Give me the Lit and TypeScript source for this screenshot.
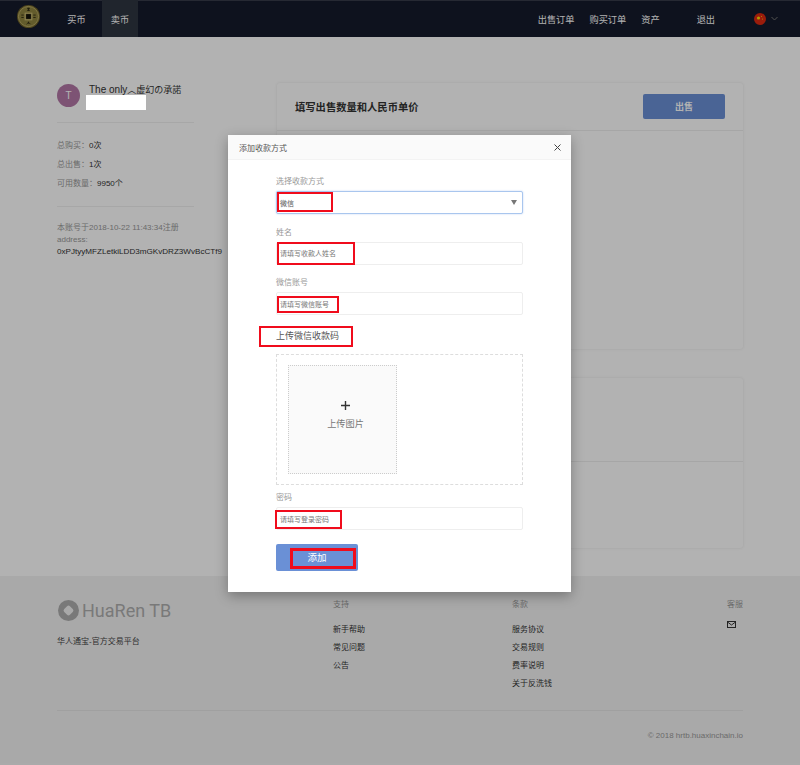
import { LitElement, html, css } from "lit";
import { customElement } from "lit/decorators.js";

const SANS = css`"Liberation Sans", "Noto Sans CJK SC", sans-serif`;

@customElement("app-root")
export class AppRoot extends LitElement {
  static styles = css`
    :host { display: block; position: relative; width: 800px; height: 765px; overflow: hidden; background: #fff; font-family: ${SANS}; font-size: 8px; color: #333; }
    .page { display: flex; flex-direction: column; height: 765px; }
    .nav { height: 37px; flex: none; background: #151a2b; display: flex; align-items: stretch; padding-left: 17px; color: #fff; font-size: 9.2px; box-sizing: border-box; box-shadow: inset 0 1px 0 rgba(255,255,255,.15); }
    .coin { width: 23px; height: 23px; margin-top: 5px; margin-right: 18px; }
    .tab { width: 37px; display: flex; align-items: center; justify-content: center; }
    .tab.active { background: #2f3541; width: 36px; margin-left: 7px; }
    .spacer { flex: 1; }
    .navr { display: flex; align-items: center; }
    .navr span.a { margin-right: 15px; }
    .navr span.out { margin-left: 37px; margin-right: 39px; }
    .flag { width: 12px; height: 12px; margin-right: 5px; }
    .chev { width: 7px; height: 5px; margin-right: 22px; }
    .main { flex: 1; background: #fff; display: flex; padding: 46px 57px 0; gap: 83px; }
    .side { width: 137px; flex: none; padding-top: 1px; }
    .user { display: flex; gap: 9px; height: 39px; box-sizing: border-box; border-bottom: 1px solid #f0f0f0; }
    .avatar { width: 23px; height: 23px; border-radius: 50%; background: #b378a6; color: #fff; display: flex; align-items: center; justify-content: center; font-size: 10px; flex: none; }
    .uname { font-size: 10px; line-height: 12px; white-space: nowrap; }
    .uname span { font-size: 9px; }
    .stats { padding: 12.500px 0 13.500px; border-bottom: 1px solid #f0f0f0; line-height: 19px; }
    .mut { color: #999; }
    .reg { padding-top: 14.500px; line-height: 12.300px; white-space: nowrap; }
    .addr { font-size: 8.100px; }
    .cards { flex: 1; display: flex; flex-direction: column; gap: 29px; }
    .card { border-radius: 3px; box-shadow: 0 0 3px rgba(0,0,0,.1); background: #fff; }
    .c1 { height: 266px; }
    .c2 { height: 170px; }
    .chead { height: 48px; box-sizing: border-box; border-bottom: 1px solid #eee; display: flex; align-items: center; justify-content: space-between; padding: 0 18px; font-size: 10.300px; font-weight: bold; }
    .sell { width: 82px; height: 25px; margin-bottom: 1px; background: #6a90d6; color: #fff; border-radius: 2px; display: flex; align-items: center; justify-content: center; font-size: 9px; font-weight: bold; }
    .c2line { height: 83px; border-bottom: 1px solid #eee; }
    .footer { height: 189px; flex: none; background: #f3f3f3; padding: 0 57px; box-sizing: border-box; }
    .fcols { display: flex; height: 135px; border-bottom: 1px solid #e6e6e6; padding-top: 24px; box-sizing: border-box; }
    .brand { width: 276px; flex: none; }
    .logo { display: flex; align-items: center; gap: 3px; font-size: 18px; color: #aeaeae; height: 21px; font-family: Roboto, ${SANS}; }
    .logo svg { width: 21px; height: 21px; margin-left: 1px; flex: none; }
    .slogan { margin-top: 15px; font-size: 8px; color: #444; line-height: 12px; }
    .col { width: 179px; flex: none; }
    .col.last { width: auto; flex: 1; display: flex; flex-direction: column; align-items: flex-end; }
    .col h4 { margin: 0 0 10.500px; font-weight: normal; font-size: 8px; color: #999; line-height: 10px; }
    .col div.l { font-size: 8px; line-height: 18.300px; color: #333; }
    .mail { width: 9px; height: 7px; display: block; margin-top: 11px; }
    .lastin { width: 16px; }
    .copy { text-align: right; font-size: 8px; color: #999; padding-top: 20px; }
    .overlay { position: absolute; inset: 0; background: rgba(0,0,0,.3); }
    .redact { position: absolute; left: 86px; top: 95px; width: 60px; height: 15px; background: #fff; }
    .modal { position: absolute; left: 228px; top: 135px; width: 343px; height: 457px; background: #fff; box-shadow: 0 4px 12px rgba(0,0,0,.3); }
    .mhead { height: 24px; background: #fafafa; border-bottom: 1px solid #f3f3f3; display: flex; align-items: center; justify-content: space-between; padding: 0 10px 0 11px; font-size: 8px; color: #555; }
    .x { width: 7px; height: 7px; }
    .form { padding: 16px 48px 0; }
    .lab { font-size: 8px; color: #999; line-height: 11px; }
    .inp { height: 23px; box-sizing: border-box; border: 1px solid #eee; border-radius: 2px; margin-top: 4px; display: flex; align-items: center; padding-left: 3px; font-size: 7px; color: #777; position: relative; background: #fff; }
    .sel { border-color: #a9c6ee; box-shadow: 0 0 2px rgba(100,150,230,.4); color: #555; }
    .tri { position: absolute; right: 5px; top: 8px; width: 0; height: 0; border-left: 3px solid transparent; border-right: 3px solid transparent; border-top: 5px solid #777; }
    .f { margin-bottom: 12.500px; }
    .mark { position: absolute; border: 2px solid #f00c1c; box-sizing: border-box; }
    .mark.thick { border-width: 3px; }
    .uptitle { font-size: 9px; color: #555; line-height: 12px; margin-top: 14.500px; }
    .upbox { height: 131px; box-sizing: border-box; border: 1px dashed #ddd; margin-top: 12px; padding: 10px; }
    .uptile { width: 109px; height: 109px; box-sizing: border-box; border: 1px dotted #ccc; background: #fafafa; display: flex; flex-direction: column; align-items: center; justify-content: center; color: #777; font-size: 9.200px; padding: 0 0 8px 6px; margin-left: 1px; }
    .plus { width: 9px; height: 9px; margin-bottom: 6px; }
    .pw { margin-top: 7.500px; }
    .add { width: 82px; height: 27px; background: #6a90d6; border-radius: 2px; margin-top: 14px; color: #fff; font-size: 9.500px; display: flex; align-items: center; justify-content: center; padding-bottom: 1px; box-sizing: border-box; }
  `;

  render() {
    return html`
      <div class="page">
        <div class="nav">
          <svg class="coin" viewBox="0 0 24 24">
            <circle cx="12" cy="12" r="12" fill="#6d6128"/>
            <circle cx="12" cy="12" r="10.500" fill="#8f8440"/>
            <circle cx="12" cy="12" r="10.500" fill="none" stroke="#bdb06a" stroke-width="1"/>
            <rect x="8.500" y="8.500" width="7" height="7" fill="none" stroke="#c9bc78" stroke-width="1"/>
            <rect x="9.500" y="9.500" width="5" height="5" fill="#14130a"/>
            <path d="M10.500 3.500h3M12 3v3M10.500 5.500h3M4.500 10.500h2.500M4.500 13h2.500M17 10.500h2.500M17 13h2.500M12 17.500v2M10 20l2-2 2 2" stroke="#2a2610" stroke-width=".9" fill="none"/>
          </svg>
          <div class="tab">买币</div>
          <div class="tab active">卖币</div>
          <div class="spacer"></div>
          <div class="navr">
            <span class="a">出售订单</span><span class="a">购买订单</span><span>资产</span>
            <span class="out">退出</span>
            <svg class="flag" viewBox="0 0 12 12"><circle cx="6" cy="6" r="6" fill="#de2910"/><circle cx="4.500" cy="5" r="1.600" fill="#ffde00"/><circle cx="7.500" cy="3.500" r=".5" fill="#ffde00"/><circle cx="8.500" cy="6" r=".5" fill="#ffde00"/></svg>
            <svg class="chev" viewBox="0 0 7 5"><path d="M.5 1l3 3 3-3" fill="none" stroke="#777" stroke-width="1"/></svg>
          </div>
        </div>
        <div class="main">
          <div class="side">
            <div class="user">
              <div class="avatar">T</div>
              <div class="uname">The only<span>︿虚幻の承諾</span></div>
            </div>
            <div class="stats">
              <div><span class="mut">总购买：</span>0次</div>
              <div><span class="mut">总出售：</span>1次</div>
              <div><span class="mut">可用数量：</span>9950个</div>
            </div>
            <div class="reg">
              <div class="mut">本账号于2018-10-22 11:43:34注册</div>
              <div class="mut">address:</div>
              <div class="addr">0xPJtyyMFZLetkiLDD3mGKvDRZ3WvBcCTf9</div>
            </div>
          </div>
          <div class="cards">
            <div class="card c1">
              <div class="chead">填写出售数量和人民币单价<div class="sell">出售</div></div>
            </div>
            <div class="card c2"><div class="c2line"></div></div>
          </div>
        </div>
        <div class="footer">
          <div class="fcols">
            <div class="brand">
              <div class="logo">
                <svg viewBox="0 0 21 21"><circle cx="10.500" cy="10.500" r="10.500" fill="#aeaeae"/><rect x="6.500" y="6.500" width="8" height="8" rx="2" transform="rotate(45 10.500 10.500)" fill="#f3f3f3"/></svg>
                HuaRen TB
              </div>
              <div class="slogan">华人通宝-官方交易平台</div>
            </div>
            <div class="col"><h4>支持</h4><div class="l">新手帮助</div><div class="l">常见问题</div><div class="l">公告</div></div>
            <div class="col"><h4>条款</h4><div class="l">服务协议</div><div class="l">交易规则</div><div class="l">费率说明</div><div class="l">关于反洗钱</div></div>
            <div class="col last"><div class="lastin"><h4>客服</h4>
              <svg class="mail" viewBox="0 0 9 7"><rect x=".5" y=".5" width="8" height="6" fill="none" stroke="#333"/><path d="M.5 1l4 3 4-3" fill="none" stroke="#333"/></svg></div>
            </div>
          </div>
          <div class="copy">© 2018 hrtb.huaxinchain.io</div>
        </div>
      </div>
      <div class="overlay"></div>
      <div class="redact"></div>
      <div class="modal">
        <div class="mhead">添加收款方式
          <svg class="x" viewBox="0 0 7 7"><path d="M.5.5l6 6M6.500.5l-6 6" stroke="#444" stroke-width="1"/></svg>
        </div>
        <div class="form">
          <div class="f"><div class="lab">选择收款方式</div><div class="inp sel">微信<span class="tri"></span></div></div>
          <div class="f"><div class="lab">姓名</div><div class="inp">请填写收款人姓名</div></div>
          <div><div class="lab">微信账号</div><div class="inp">请填写微信账号</div></div>
          <div class="uptitle">上传微信收款码</div>
          <div class="upbox"><div class="uptile">
            <svg class="plus" viewBox="0 0 9 9"><path d="M4.500 0v9M0 4.500h9" stroke="#333" stroke-width="1.400"/></svg>
            上传图片</div></div>
          <div class="pw"><div class="lab">密码</div><div class="inp">请填写登录密码</div></div>
          <div class="add">添加</div>
        </div>
        <div class="mark" style="left:49px;top:57px;width:56px;height:20px"></div>
        <div class="mark" style="left:49px;top:107px;width:78px;height:23px"></div>
        <div class="mark" style="left:49px;top:161px;width:62px;height:17px"></div>
        <div class="mark" style="left:31px;top:191px;width:94px;height:21px"></div>
        <div class="mark" style="left:47px;top:375px;width:67px;height:19px"></div>
        <div class="mark thick" style="left:62px;top:413px;width:66px;height:21px"></div>
      </div>
    `;
  }
}
